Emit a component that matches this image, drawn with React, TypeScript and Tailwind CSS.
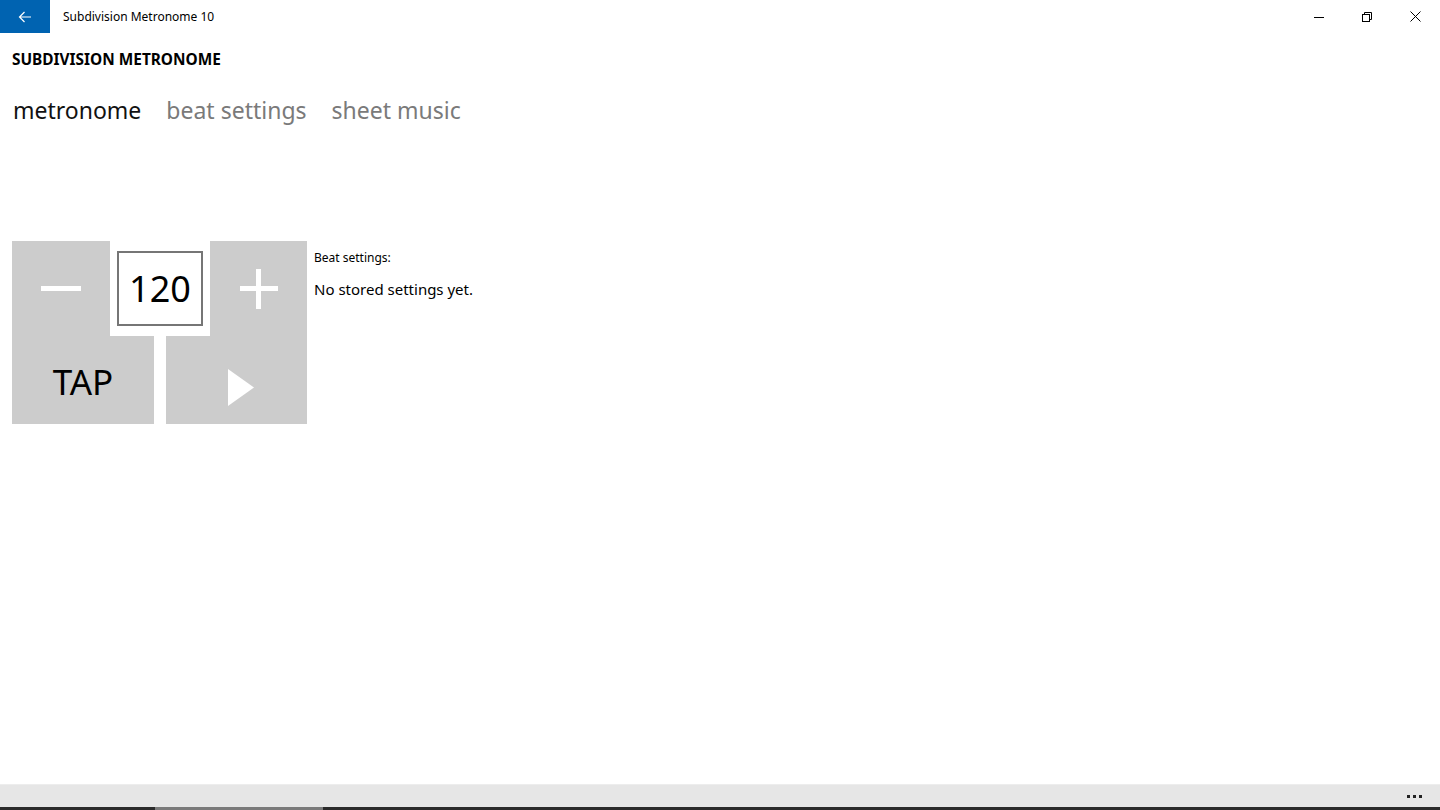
import React from "react";

const font = { fontFamily: '"Noto Sans", "Open Sans", sans-serif' };

function TitleBar() {
  return (
    <div className="flex h-[33px] items-stretch bg-white">
      <div className="flex w-[50px] items-center justify-center bg-[#0063b1]">
        <svg width="14" height="12" viewBox="0 0 14 12" fill="none" stroke="white" strokeWidth="1.2">
          <path d="M13 6H1.5M6.5 1L1.5 6l5 5" />
        </svg>
      </div>
      <div className="ml-[13px] flex items-center text-[12px] text-black">Subdivision Metronome 10</div>
      <div className="ml-auto flex items-stretch">
        {/* minimize */}
        <div className="flex w-[48px] items-center justify-center">
          <svg width="10" height="10" viewBox="0 0 10 10" stroke="black" strokeWidth="1">
            <path d="M0 5.5h10" />
          </svg>
        </div>
        {/* restore */}
        <div className="flex w-[48px] items-center justify-center">
          <svg width="10" height="10" viewBox="0 0 10 10" fill="none" stroke="black" strokeWidth="1">
            <rect x="0.5" y="2.5" width="7" height="7" />
            <path d="M2.5 2.5V0.5h7v7h-2" />
          </svg>
        </div>
        {/* close */}
        <div className="flex w-[48px] items-center justify-center">
          <svg width="11" height="11" viewBox="0 0 11 11" stroke="black" strokeWidth="1">
            <path d="M0.5 0.5l10 10M10.5 0.5l-10 10" />
          </svg>
        </div>
        <div className="w-[1px]" />
      </div>
    </div>
  );
}

function Tiles() {
  return (
    <div className="flex flex-col">
      <div className="flex">
        <div className="flex h-[95px] w-[98px] items-center justify-center bg-[#cccccc]">
          <div className="h-[5px] w-[40px] bg-white" />
        </div>
        <div className="flex w-[100px] justify-center pt-[10px]">
          <div className="flex h-[75px] w-[86px] items-center justify-center border-2 border-[#767676] bg-white text-[36px] text-black">
            120
          </div>
        </div>
        <div className="relative flex h-[95px] w-[97px] items-center justify-center bg-[#cccccc]">
          <div className="absolute h-[5px] w-[38px] bg-white" />
          <div className="absolute h-[40px] w-[5px] bg-white" />
        </div>
      </div>
      <div className="flex gap-[12px]">
        <div className="flex h-[88px] w-[142px] items-center justify-center bg-[#cccccc] pt-[4px] text-[35px] text-black">
          TAP
        </div>
        <div className="flex h-[88px] w-[141px] items-center justify-center bg-[#cccccc] pl-[8px] pt-[14px]">
          <svg width="26" height="37" viewBox="0 0 26 37">
            <path d="M0 0L26 18.5L0 37Z" fill="white" />
          </svg>
        </div>
      </div>
    </div>
  );
}

export default function App() {
  return (
    <div className="flex h-[810px] w-[1440px] flex-col overflow-hidden bg-white" style={font}>
      <TitleBar />
      <div className="flex-1 pl-[12px]">
        <div className="mt-[17px] text-[15.4px] font-bold leading-[20px] text-black">SUBDIVISION METRONOME</div>
        <div className="mt-[24px] flex gap-[25px] pl-[1px] text-[23px] leading-[32px]">
          <span className="text-[#111]">metronome</span>
          <span className="text-[#7a7a7a]">beat settings</span>
          <span className="text-[#7a7a7a]">sheet music</span>
        </div>
        <div className="mt-[115px] flex">
          <Tiles />
          <div className="ml-[7px] flex flex-col">
            <div className="mt-[9px] text-[12px] leading-[16px] text-black">Beat settings:</div>
            <div className="mt-[12px] text-[15px] leading-[22px] text-black">No stored settings yet.</div>
          </div>
        </div>
      </div>
      <div className="flex h-[23px] items-center justify-end border-t border-[#ededed] bg-[#e6e6e6] pr-[18px]">
        <div className="flex gap-[3px]">
          <div className="h-[3px] w-[3px] bg-[#222]" />
          <div className="h-[3px] w-[3px] bg-[#222]" />
          <div className="h-[3px] w-[3px] bg-[#222]" />
        </div>
      </div>
      <div className="flex h-[3px]">
        <div className="w-[155px] bg-[#2b2b2b]" />
        <div className="w-[168px] bg-[#7a7a7a]" />
        <div className="flex-1 bg-[#2b2b2b]" />
      </div>
    </div>
  );
}
